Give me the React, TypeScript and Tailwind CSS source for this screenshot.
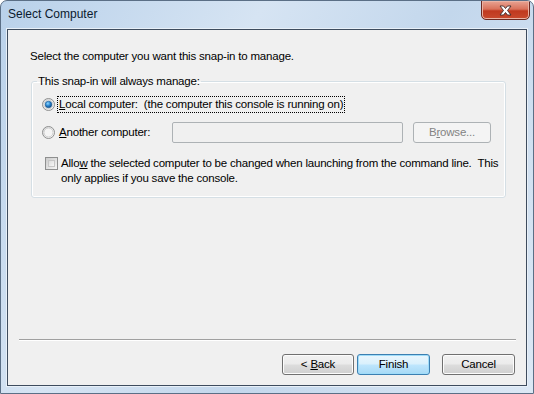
import React from "react";

function Radio({ checked }: { checked?: boolean }) {
    return (
        <svg width="13" height="13" viewBox="0 0 13 13" className="shrink-0">
            <defs>
                <linearGradient id="rbg" x1="0" y1="0" x2="1" y2="1">
                    <stop offset="0" stopColor="#d9dadb" />
                    <stop offset="1" stopColor="#ffffff" />
                </linearGradient>
                <radialGradient id="rdot" cx="0.4" cy="0.35" r="0.7">
                    <stop offset="0" stopColor="#8fd8ff" />
                    <stop offset="0.5" stopColor="#2a85d0" />
                    <stop offset="1" stopColor="#0b3f75" />
                </radialGradient>
            </defs>
            <circle cx="6.5" cy="6.5" r="6" fill="url(#rbg)" stroke="#8e8f8f" strokeWidth="1" />
            <circle cx="6.5" cy="6.5" r="4.5" fill="#f4f4f4" stroke="#c4c4c4" strokeWidth="0.8" />
            {checked && <circle cx="6.5" cy="6.5" r="3.3" fill="url(#rdot)" stroke="#1b5a94" strokeWidth="0.6" />}
        </svg>
    );
}

function Button({ children, primary, disabled, className = "" }: { children: React.ReactNode; primary?: boolean; disabled?: boolean; className?: string }) {
    const look = disabled
        ? "border-[#adb2b5] bg-[#f4f4f4] text-[#838383]"
        : primary
            ? "border-[#3c7fb1] bg-[linear-gradient(#eaf6fd_0%,#d9f0fc_48%,#bee6fd_52%,#a7d9f5_100%)] text-black shadow-[inset_0_0_0_1px_#9fdcf9]"
            : "border-[#707070] bg-[linear-gradient(#f2f2f2_0%,#ebebeb_48%,#dddddd_52%,#cfcfcf_100%)] text-black shadow-[inset_0_0_0_1px_#fcfcfc]";
    return (
        <div className={`h-[21px] rounded-[3px] border flex items-center justify-center ${look} ${className}`}>
            {children}
        </div>
    );
}

export default function App() {
    return (
        <div className="w-[534px] h-[394px] relative flex flex-col rounded-t-[7px] border border-[#5b6f86] bg-[linear-gradient(120deg,#b9d1ea_0%,#d6e4f3_35%,#c3d7ec_60%,#dce8f5_100%)] font-['Liberation_Sans',Arial,sans-serif] text-[11.5px] tracking-[-0.2px] text-black overflow-hidden">
            {/* Title bar */}
            <div className="h-[28px] shrink-0 flex items-center pl-[7px] pb-[2px]">
                <span className="text-[12px] tracking-normal text-[#0b1a2e]">Select Computer</span>
            </div>

            {/* Close button */}
            <div className="absolute top-[-1px] right-[3px] w-[49px] h-[20px] rounded-b-[5px] border border-[#6d2a22] bg-[linear-gradient(#e8a493_0%,#d9725b_45%,#c0391f_55%,#c94a2e_100%)] shadow-[inset_0_0_0_1px_#eab3a4] flex items-center justify-center">
                <svg width="15" height="11" viewBox="0 0 15 11">
                    <path d="M2 1 L5.5 1 L7.5 3.5 L9.5 1 L13 1 L9.5 5.5 L13 10 L9.5 10 L7.5 7.5 L5.5 10 L2 10 L5.5 5.5 Z" fill="#ffffff" stroke="#3b2a2a" strokeWidth="0.9" strokeLinejoin="round" />
                </svg>
            </div>

            {/* Client area */}
            <div className="flex-1 ml-[6px] mr-[6px] mb-[7px] border border-[#3e4c5e] bg-[#f0f0f0] flex flex-col shadow-[0_0_0_1px_#e8f0f8]">
                <div className="pl-[22px] pt-[19px] leading-[15px]">Select the computer you want this snap-in to manage.</div>

                <fieldset className="ml-[23px] mt-[10px] w-[475px] h-[124px] rounded-[3px] border border-[#d5dfe5] shadow-[inset_0_0_0_1px_#ffffff] px-0">
                    <legend className="ml-[5px] px-[1px] leading-[15px]">This snap-in will always manage:</legend>

                    <div className="flex items-center pl-[10px] mt-[7px] h-[17px]">
                        <Radio checked />
                        <span className="ml-[3px] px-[1px] outline outline-1 outline-dotted outline-black leading-[15px]">
                            <span className="underline">L</span>ocal computer:&nbsp; (the computer this console is running on)
                        </span>
                    </div>

                    <div className="flex items-center pl-[10px] mt-[9px] h-[21px]">
                        <Radio />
                        <span className="ml-[4px] w-[113px]">
                            <span className="underline">A</span>nother computer:
                        </span>
                        <div className="w-[231px] h-[21px] border border-[#adb2b5] rounded-[2px] bg-[#f0f0f0]" />
                        <Button disabled className="ml-[10px] w-[78px]">
                            B<span className="underline">r</span>owse...
                        </Button>
                    </div>

                    <div className="flex items-start pl-[13px] mt-[13px]">
                        <div className="w-[13px] h-[13px] mt-[1px] shrink-0 border border-[#8e8f8f] bg-[linear-gradient(135deg,#cbcbcb,#f6f6f6)] p-[2px]">
                            <div className="w-full h-full border border-[#c6c6c6] bg-[linear-gradient(135deg,#dcdcdc,#f7f7f7)]" />
                        </div>
                        <div className="ml-[3px] leading-[15px] w-[440px]">
                            Allo<span className="underline">w</span> the selected computer to be changed when launching from the command line.&nbsp; This only applies if you save the console.
                        </div>
                    </div>
                </fieldset>

                <div className="flex-1" />

                <div className="ml-[11px] w-[497px] border-t border-[#a0a0a0] shadow-[0_1px_0_#ffffff]" />

                <div className="flex justify-end pr-[11px] pt-[14px] pb-[10px] gap-[3px]">
                    <Button className="w-[72px]">
                        &lt; <span className="underline ml-[3px]">B</span>ack
                    </Button>
                    <Button primary className="w-[73px]">Finish</Button>
                    <Button className="w-[73px] ml-[9px]">Cancel</Button>
                </div>
            </div>
        </div>
    );
}
